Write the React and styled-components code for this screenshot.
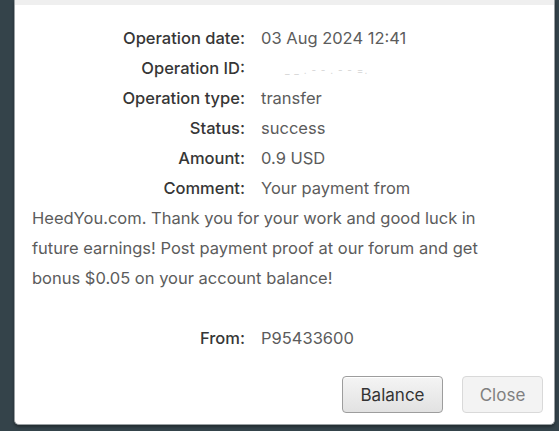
import styled, { createGlobalStyle } from 'styled-components'

const Global = createGlobalStyle`
  html, body {
    margin: 0;
    padding: 0;
    background: #34434a;
  }
  body {
    font-family: Inter, "Open Sans", "Liberation Sans", sans-serif;
  }
`

const Screen = styled.div`
  width: 559px;
  height: 431px;
  padding-left: 14px;
  box-sizing: border-box;
`

const Dialog = styled.div`
  width: 541px;
  height: 425px;
  box-sizing: border-box;
  background: #fff;
  border: 1px solid #9aa0a3;
  border-top: none;
  border-radius: 0 0 5px 5px;
  box-shadow: 0 2px 3px rgba(0, 0, 0, 0.35);
  display: flex;
  flex-direction: column;
  overflow: hidden;
`

const TitleBar = styled.div`
  height: 5px;
  background: #efefef;
  flex-shrink: 0;
`

const Body = styled.div`
  padding: 18px 52px 0 17px;
  font-size: 16.5px;
  line-height: 30px;
  color: #5c5c5c;
`

const Row = styled.div`
  margin-top: ${p => (p.$gap ? '30px' : '0')};
`

const Label = styled.span`
  display: inline-block;
  width: 213px;
  margin-right: 16px;
  text-align: right;
  color: #363636;
  font-weight: 500;
`

const Value = styled.span`
  color: #5c5c5c;
`

const Hidden = styled.span`
  color: #d4d4d4;
  font-size: 10px;
  line-height: 0;
  letter-spacing: 1px;
  margin-left: 24px;
`

const Footer = styled.div`
  margin-top: auto;
  display: flex;
  justify-content: flex-end;
  gap: 19px;
  padding: 0 11px 11px 0;
`

const Button = styled.button`
  height: 37px;
  width: ${p => p.$w}px;
  border-radius: 4px;
  font-family: inherit;
  font-size: 17px;
  border: 1px solid ${p => (p.$muted ? '#d9d9d9' : '#9d9d9d')};
  background: ${p => (p.$muted ? '#f3f3f3' : 'linear-gradient(#f4f4f4, #e2e2e2)')};
  color: ${p => (p.$muted ? '#808080' : '#333')};
  box-shadow: ${p => (p.$muted ? 'none' : 'inset 0 1px 0 #fff')};
  cursor: pointer;
`

const App = () => {
  return (
    <Screen>
      <Global />
      <Dialog>
        <TitleBar />
        <Body>
          <Row>
            <Label>Operation date:</Label>
            <Value>03 Aug 2024 12:41</Value>
          </Row>
          <Row>
            <Label>Operation ID:</Label>
            <Hidden>_ _ . - - . - - =.</Hidden>
          </Row>
          <Row>
            <Label>Operation type:</Label>
            <Value>transfer</Value>
          </Row>
          <Row>
            <Label>Status:</Label>
            <Value>success</Value>
          </Row>
          <Row>
            <Label>Amount:</Label>
            <Value>0.9 USD</Value>
          </Row>
          <Row>
            <Label>Comment:</Label>
            <Value>
              Your payment from HeedYou.com. Thank you for your work and good luck in future earnings! Post
              payment proof at our forum and get bonus $0.05 on your account balance!
            </Value>
          </Row>
          <Row $gap>
            <Label>From:</Label>
            <Value>P95433600</Value>
          </Row>
        </Body>
        <Footer>
          <Button $w={101}>Balance</Button>
          <Button $w={81} $muted>Close</Button>
        </Footer>
      </Dialog>
    </Screen>
  )
}

export default App
